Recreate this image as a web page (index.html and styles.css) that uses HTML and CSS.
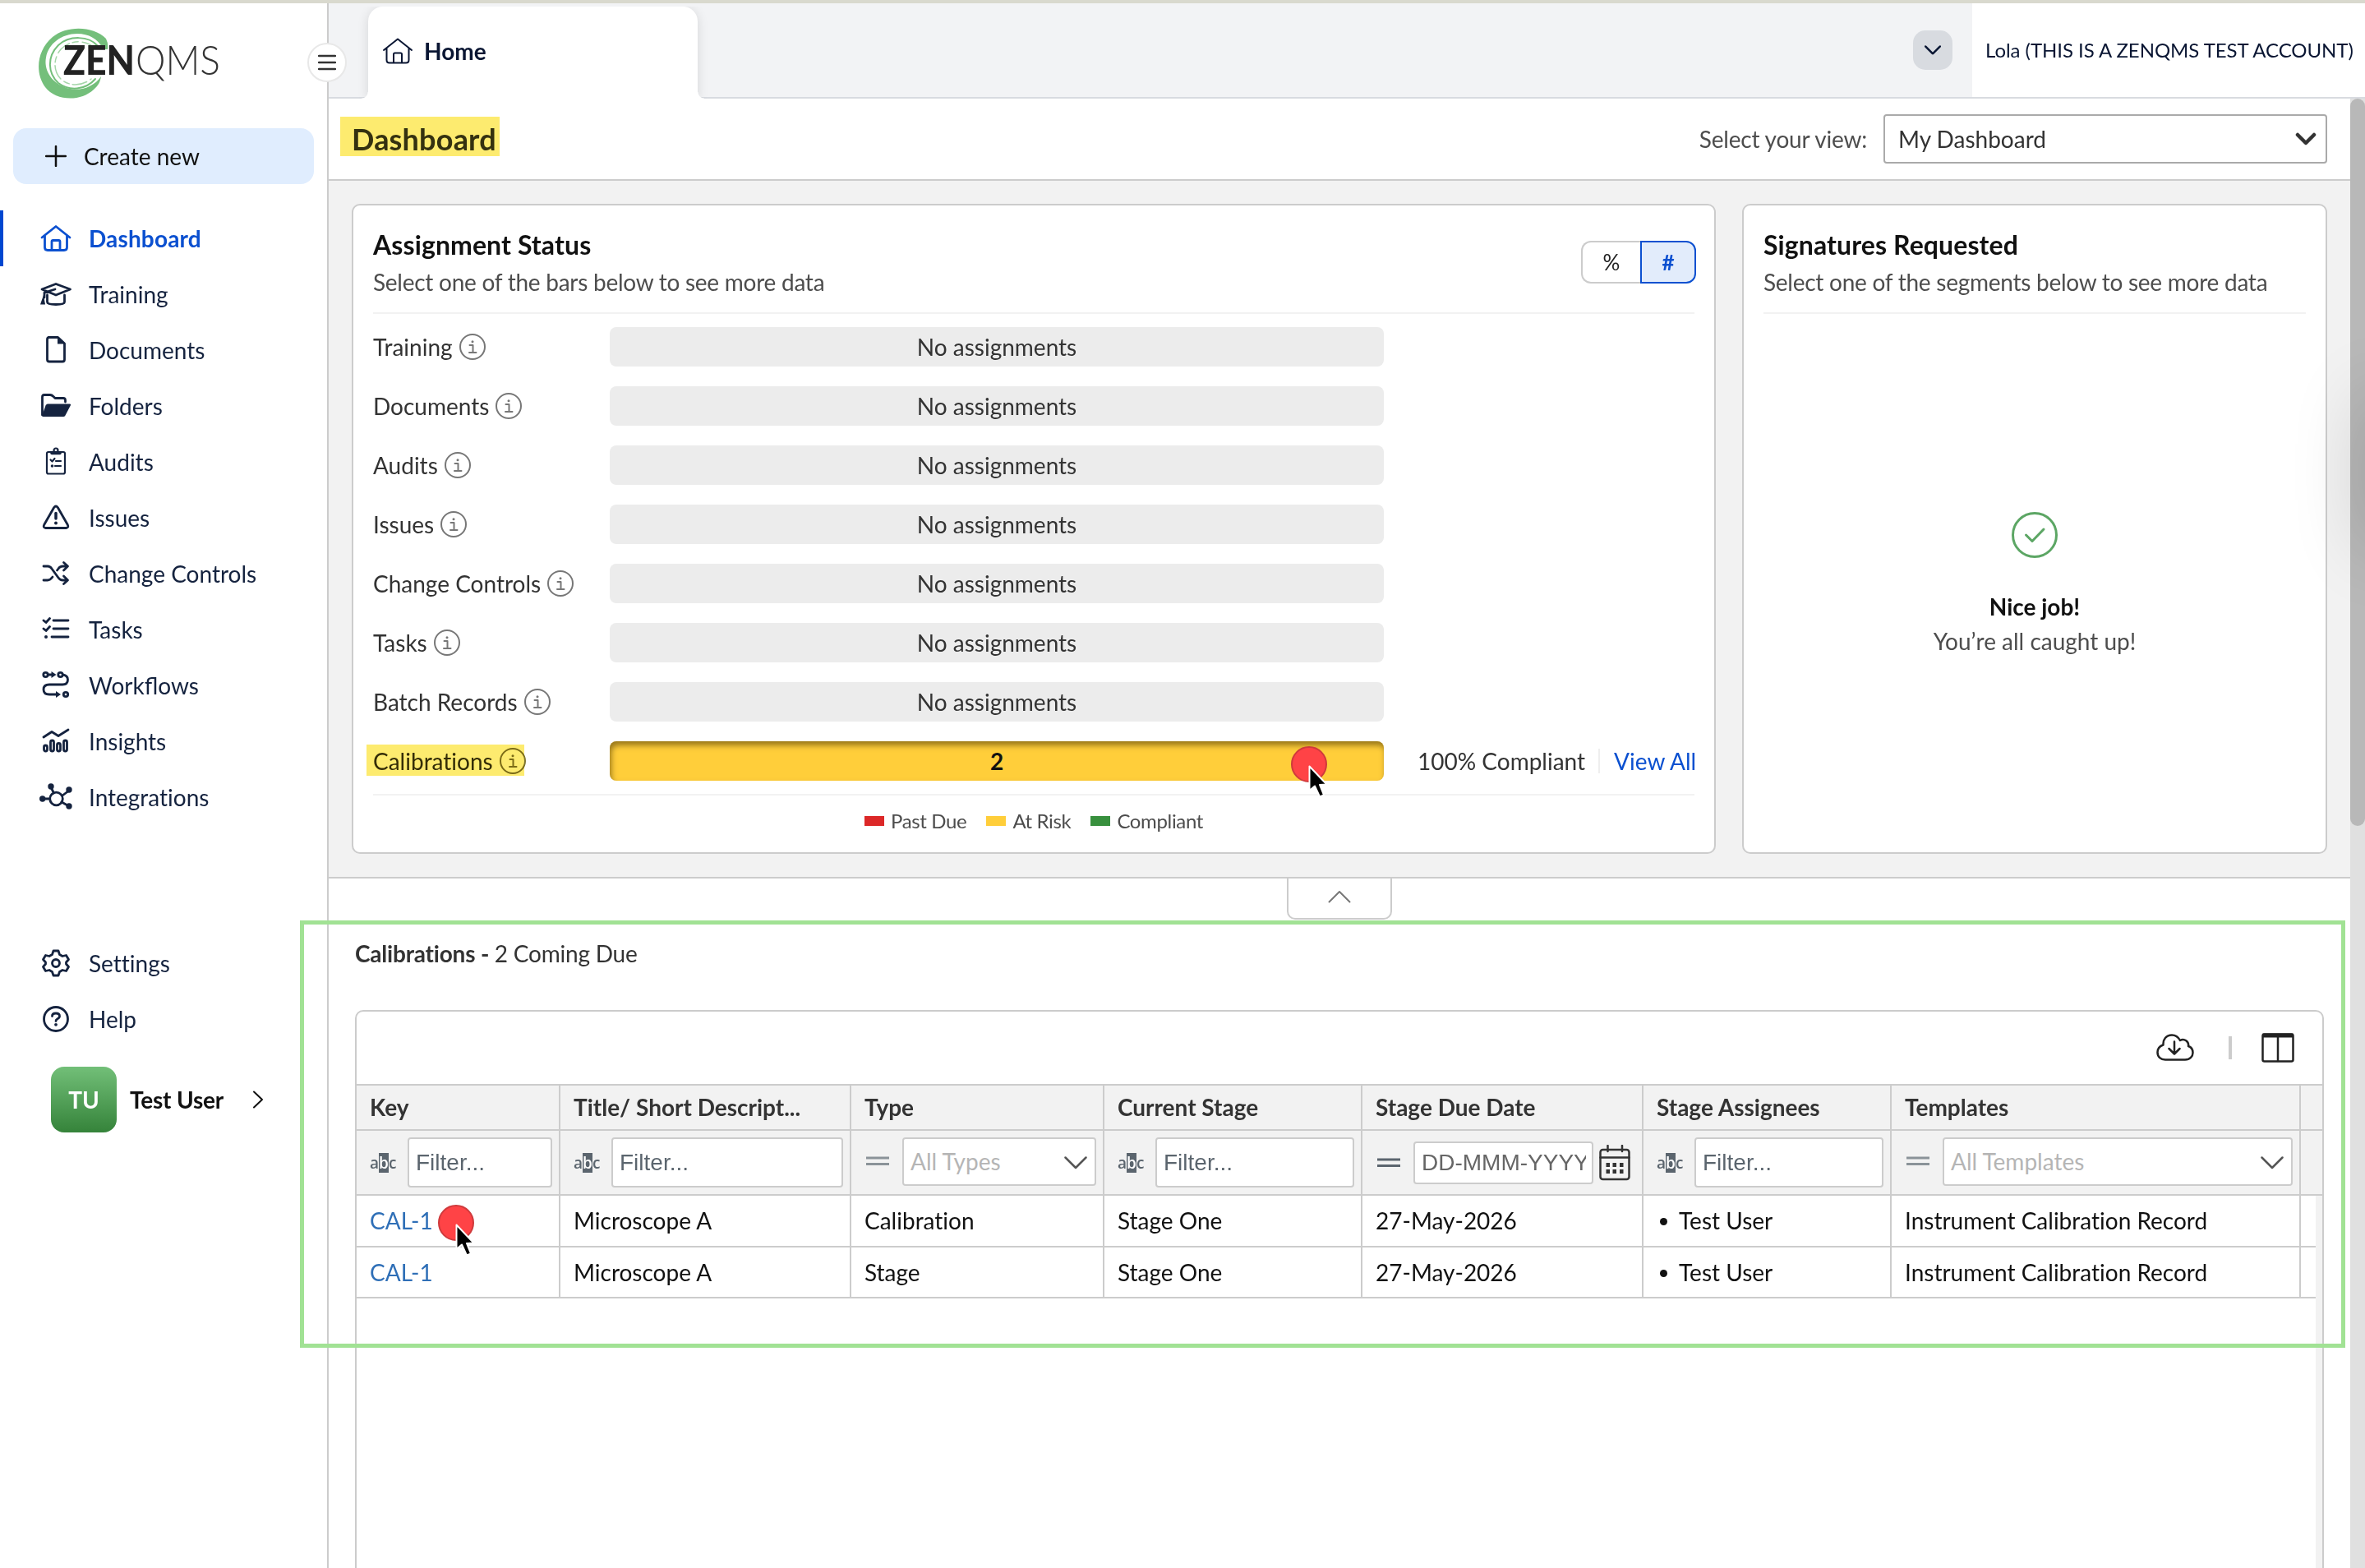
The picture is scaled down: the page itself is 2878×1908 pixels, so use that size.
FILE: index.html
```html
<!DOCTYPE html>
<html lang="en">
<head>
  <meta charset="UTF-8">
  <meta name="viewport" content="width=device-width, initial-scale=1.0">
  <title>ZenQMS - Dashboard</title>
  <link rel="stylesheet" href="styles.css">
</head>
<body>
  <svg class="defs" width="0" height="0">
    <symbol id="home" viewBox="0 0 40 40">
      <path d="M3 19 L20 5.5 L37 19 M6.5 17 V31 Q6.5 34.5 10 34.5 H30 Q33.5 34.5 33.5 31 V17 M15 34 V24 Q15 22.5 16.5 22.5 H23.5 Q25 22.5 25 24 V34"/>
    </symbol>
    <symbol id="info" viewBox="0 0 32 32">
      <circle cx="16" cy="16" r="15"/>
      <path d="M12.5 14 H16.5 V23 M12 23 H20.5"/>
      <circle cx="16" cy="9.8" r="1.5" class="solid"/>
    </symbol>
    <symbol id="cursor" viewBox="0 0 24 40">
      <path class="arrow" d="M1.5 1.5 V31 L8 25.500 L14 38.500 L19 36.500 L14 24 L22.500 23.500 Z"/>
    </symbol>
    <symbol id="equals" viewBox="0 0 28 12">
      <path d="M0 2 H28 M0 9.500 H28"/>
    </symbol>
    <symbol id="down" viewBox="0 0 28 16">
      <path d="M1.500 1.500 L14 14 L26.500 1.500"/>
    </symbol>
  </svg>

  <div class="app">
    <aside class="sidebar">
      <div class="logo">
        <svg width="240" height="90" viewBox="0 0 240 90">
          <path class="brush" d="M86 14 C70 -2 38 -2 21 12 C2 28 -1 55 12 73 C25 90 55 91 71 76 C77 71 79 66 80 60 C71 73 54 79 38 74 C20 68 10 53 13 37 C16 20 32 8 51 8 C65 8 76 14 83 27 H88 Q89 20 86 14 Z" transform="translate(-3 1)"/>
          <path class="brush-thin" d="M73 24 C62 11 38 11 25 23 C11 37 12 57 25 69 C38 79 58 78 70 64"/>
          <path class="brush-dash" d="M70 27 C58 15 38 17 28 28 C18 40 19 56 29 65 C40 74 55 72 65 64"/>
          <text x="31" y="59" class="logo-zen" textLength="87" lengthAdjust="spacingAndGlyphs">ZEN</text>
          <text x="119" y="59" class="logo-qms" textLength="103" lengthAdjust="spacingAndGlyphs">QMS</text>
        </svg>
      </div>
      <div class="create">
        <svg class="icon" width="26" height="26" viewBox="0 0 26 26"><path d="M13 1 V25 M1 13 H25"/></svg>
        Create new
      </div>
      <nav class="nav">
        <a class="nav-item active"><svg class="icon"><use href="#home"/></svg>Dashboard</a>
        <a class="nav-item">
          <svg class="icon" viewBox="0 0 40 40"><path d="M3 14 L20 7.500 L37.500 14 L20 21 Z M9.500 21 V29.500 Q9.500 32.500 20 32.500 Q30.500 32.500 30.500 29.500 V21 M19 14 L6 18 V24"/><path class="solid" d="M5 21 L7 32.500 H1 Z"/></svg>
          Training
        </a>
        <a class="nav-item">
          <svg class="icon" viewBox="0 0 40 40"><path d="M11 4.500 H22.500 L30.500 12 V31.500 Q30.500 34 28 34 H12 Q9.500 34 9.500 31.500 V7 Q9.500 4.500 12 4.500"/><path class="solid" d="M22 4 V12.500 H31.500 Z"/></svg>
          Documents
        </a>
        <a class="nav-item">
          <svg class="icon" viewBox="0 0 40 40"><path d="M3.500 31 V9 Q3.500 6.500 6 6.500 H13 Q15 6.500 17 8.500 L19 10.500 H29 Q31.500 10.500 31.500 13 V15"/><path class="solid" d="M10 17.500 H37 Q38.500 17.500 38 19 L31.500 31.500 Q30.500 33 29 33 H4.500 Q3 33 3.500 31 L7.500 19.500 Q8.500 17.500 10 17.500 Z"/></svg>
          Folders
        </a>
        <a class="nav-item">
          <svg class="icon thin" viewBox="0 0 40 40"><rect x="9" y="8" width="22" height="26.500" rx="2"/><circle cx="20" cy="6" r="2.500"/><path class="thick" d="M15 9.500 H25"/><path d="M13.500 17.500 L15.500 19.500 L18.500 16 M20 19 H26 M19 25 H26"/><circle class="solid" cx="15.500" cy="25" r="1.800"/></svg>
          Audits
        </a>
        <a class="nav-item">
          <svg class="icon" viewBox="0 0 40 40"><path d="M17.700 7.500 Q20 4.500 22.300 7.500 L34.300 28.500 Q36 32 32.500 32.500 H7.500 Q4 32 5.700 28.500 Z"/><path class="thick" d="M20 14.500 V21"/><circle class="solid" cx="20" cy="26.500" r="2"/></svg>
          Issues
        </a>
        <a class="nav-item">
          <svg class="icon" viewBox="0 0 40 40"><path d="M5 11 H10 Q13 11 15 14 L23 25 Q25 28 28.500 28 H34 M5 28 H10 Q13 28 16 24 M21.500 16 L23 14 Q25 11 28.500 11 H34 M29.500 6.500 L34.500 11 L29.500 16 M29.500 23 L34.500 28 L29.500 32.500"/></svg>
          Change Controls
        </a>
        <a class="nav-item">
          <svg class="icon" viewBox="0 0 40 40"><path d="M17 9 H35 M17 19 H35 M15 29 H35 M5 9 L8 11.500 L12.500 6.500 M5 19 L8 21.500 L12.500 16.500"/><circle class="solid" cx="8" cy="29" r="2"/></svg>
          Tasks
        </a>
        <a class="nav-item workflows">
          <svg class="icon" viewBox="0 0 40 40"><circle cx="7.500" cy="7" r="2.700"/><circle cx="25.500" cy="7" r="2.700"/><circle cx="32" cy="31" r="2.700"/><path d="M10.500 7 H16 M28.500 7 Q34.500 8 34.500 13 Q34.500 19 28 19 H12 Q5 19 5 25 Q5 31 12 31 H21"/><path class="solid" d="M14.500 3 L20.500 7 L14.500 11 Z M20 27 L26 31 L20 35 Z"/></svg>
          Workflows
        </a>
        <a class="nav-item">
          <svg class="icon" viewBox="0 0 40 40"><path d="M5 15 L15 8.500 L23 13.500 L35 6"/><rect x="5.500" y="25" width="4" height="7" rx="2"/><rect x="13.500" y="19" width="4" height="13" rx="2"/><rect x="21.500" y="22.500" width="4" height="9.500" rx="2"/><rect x="29.500" y="19" width="4" height="13" rx="2"/></svg>
          Insights
        </a>
        <a class="nav-item">
          <svg class="icon" viewBox="0 0 40 40"><circle cx="20.500" cy="22" r="7.800"/><path d="M4 22 H12 M14 8 L17.500 15 M28 18 L36 12 M27 26 L36 31"/><g class="solid"><circle cx="3.700" cy="22" r="3.700"/><circle cx="14" cy="7" r="3.700"/><circle cx="36" cy="11" r="3.700"/><circle cx="36" cy="31" r="3.700"/></g></svg>
          Integrations
        </a>
      </nav>
      <nav class="nav nav-bottom">
        <a class="nav-item">
          <svg class="icon" viewBox="0 0 40 40"><path d="M17 5 H23 L24.500 9.500 L28 11.500 L32.500 10.500 L35.500 15.500 L32.500 19 V21 L35.500 24.500 L32.500 29.500 L28 28.500 L24.500 30.500 L23 35 H17 L15.500 30.500 L12 28.500 L7.500 29.500 L4.500 24.500 L7.500 21 V19 L4.500 15.500 L7.500 10.500 L12 11.500 L15.500 9.500 Z"/><circle cx="20" cy="20" r="4.500"/></svg>
          Settings
        </a>
        <a class="nav-item">
          <svg class="icon" viewBox="0 0 40 40"><circle cx="20" cy="20" r="14.500"/><path d="M15.500 16.500 Q15.500 13 20 13 Q24.500 13 24.500 16.500 Q24.500 18.500 22 19.700 Q20 20.700 20 22.500"/><circle class="solid" cx="20" cy="26.800" r="1.900"/></svg>
          Help
        </a>
      </nav>
      <div class="user">
        <div class="avatar">TU</div>
        <span class="user-name">Test User</span>
        <svg class="icon" width="14" height="22" viewBox="0 0 14 22"><path d="M2 1.500 L12 11 L2 20.500"/></svg>
      </div>
      <button class="menu-toggle">
        <svg width="22" height="20" viewBox="0 0 22 20"><path d="M1 2 H21 M1 10 H21 M1 18 H21"/></svg>
      </button>
    </aside>

    <div class="main">
      <div class="tabbar">
        <div class="tab"><svg class="icon"><use href="#home"/></svg>Home</div>
        <div class="tab-more"><svg width="20" height="12" viewBox="0 0 28 16"><use href="#down"/></svg></div>
        <div class="account">Lola (THIS IS A ZENQMS TEST ACCOUNT)</div>
      </div>

      <div class="body">
        <div class="content">
          <header class="page-head">
            <h1><span>Dashboard</span></h1>
            <label>Select your view:</label>
            <div class="view-select">My Dashboard
              <svg width="26" height="16" viewBox="0 0 26 16"><path d="M3 3 L13 13 L23 3"/></svg>
            </div>
          </header>

          <section class="cards">
            <div class="card status-card">
              <div class="card-head">
                <div>
                  <h2>Assignment Status</h2>
                  <p>Select one of the bars below to see more data</p>
                </div>
                <div class="toggle"><span>%</span><span class="on">#</span></div>
              </div>
              <div class="bars">
                <div class="bar-row"><div class="bar-label">Training<svg class="info"><use href="#info"/></svg></div><div class="bar">No assignments</div></div>
                <div class="bar-row"><div class="bar-label">Documents<svg class="info"><use href="#info"/></svg></div><div class="bar">No assignments</div></div>
                <div class="bar-row"><div class="bar-label">Audits<svg class="info"><use href="#info"/></svg></div><div class="bar">No assignments</div></div>
                <div class="bar-row"><div class="bar-label">Issues<svg class="info"><use href="#info"/></svg></div><div class="bar">No assignments</div></div>
                <div class="bar-row"><div class="bar-label">Change Controls<svg class="info"><use href="#info"/></svg></div><div class="bar">No assignments</div></div>
                <div class="bar-row"><div class="bar-label">Tasks<svg class="info"><use href="#info"/></svg></div><div class="bar">No assignments</div></div>
                <div class="bar-row"><div class="bar-label">Batch Records<svg class="info"><use href="#info"/></svg></div><div class="bar">No assignments</div></div>
                <div class="bar-row">
                  <div class="bar-label marked">Calibrations<svg class="info"><use href="#info"/></svg></div>
                  <div class="bar at-risk">2
                    <div class="click click-bar"><svg><use href="#cursor"/></svg></div>
                  </div>
                  <div class="bar-meta"><span class="compliant">100% Compliant</span><a>View All</a></div>
                </div>
              </div>
              <div class="legend">
                <span><i class="red"></i>Past Due</span>
                <span><i class="yellow"></i>At Risk</span>
                <span><i class="green"></i>Compliant</span>
              </div>
            </div>

            <div class="card sign-card">
              <div class="card-head">
                <div>
                  <h2>Signatures Requested</h2>
                  <p>Select one of the segments below to see more data</p>
                </div>
              </div>
              <div class="empty">
                <svg width="56" height="56" viewBox="0 0 56 56"><circle cx="28" cy="28" r="26.500"/><path d="M17.500 28 L25 35.500 L39 21"/></svg>
                <strong>Nice job!</strong>
                <span>You’re all caught up!</span>
              </div>
            </div>
          </section>

          <section class="details">
            <div class="collapse"><svg width="28" height="16" viewBox="0 0 28 16"><path d="M1.500 14.500 L14 2 L26.500 14.500"/></svg></div>
            <h3>Calibrations - <span>2 Coming Due</span></h3>
            <div class="grid">
              <div class="grid-tools">
                <svg width="46" height="34" viewBox="0 0 46 34"><path d="M11 31.500 H35 C41 31.500 44.500 27.500 44.500 23 C44.500 19 42 16 39 15 C40 9.500 34 5 29 8 C26.500 3.500 23 1.500 19 1.500 C12 1.500 8 7 8.500 13.500 C4 15 1.500 18.500 1.500 22.500 C1.500 28 5.500 31.500 11 31.500 Z M22 9.500 V24 M15.500 18 L22 24.500 L28.500 18"/></svg>
                <i class="tool-sep"></i>
                <svg width="40" height="36" viewBox="0 0 40 36"><rect x="1.500" y="1.500" width="37" height="33" rx="2"/><path d="M20 4 V34"/><path class="top" d="M1.500 3 H38.500"/></svg>
              </div>
              <div class="grid-row grid-head">
                <div>Key</div><div>Title/ Short Descript...</div><div>Type</div><div>Current Stage</div><div>Stage Due Date</div><div>Stage Assignees</div><div>Templates</div><div></div>
              </div>
              <div class="grid-row grid-filter">
                <div><span class="abc">a<b>b</b>c</span><span class="input">Filter...</span></div>
                <div><span class="abc">a<b>b</b>c</span><span class="input">Filter...</span></div>
                <div><svg class="eq light"><use href="#equals"/></svg><span class="input select">All Types<svg class="caret"><use href="#down"/></svg></span></div>
                <div><span class="abc">a<b>b</b>c</span><span class="input">Filter...</span></div>
                <div>
                  <svg class="eq"><use href="#equals"/></svg><span class="input date"><span>DD-MMM-YYYY</span></span>
                  <svg class="calendar" width="38" height="44" viewBox="0 0 38 44"><rect x="1.500" y="6" width="35" height="36" rx="3"/><path d="M1.500 15.500 H36.500 M10.500 1 V8 M28 1 V8"/><path class="dots" d="M8.500 24.500 H13 M16.500 24.500 H21 M25 24.500 H29.500 M8.500 32.500 H13 M16.500 32.500 H21 M25 32.500 H29.500"/></svg>
                </div>
                <div><span class="abc">a<b>b</b>c</span><span class="input">Filter...</span></div>
                <div><svg class="eq light"><use href="#equals"/></svg><span class="input select">All Templates<svg class="caret"><use href="#down"/></svg></span></div>
                <div></div>
              </div>
              <div class="grid-body">
                <div class="grid-row">
                  <div><a>CAL-1</a><div class="click click-key"><svg><use href="#cursor"/></svg></div></div>
                  <div>Microscope A</div><div>Calibration</div><div>Stage One</div><div>27-May-2026</div><div class="assignee">Test User</div><div>Instrument Calibration Record</div><div></div>
                </div>
                <div class="grid-row">
                  <div><a>CAL-1</a></div>
                  <div>Microscope A</div><div>Stage</div><div>Stage One</div><div>27-May-2026</div><div class="assignee">Test User</div><div>Instrument Calibration Record</div><div></div>
                </div>
              </div>
            </div>
          </section>
        </div>
        <div class="scrollbar"><div class="thumb"></div></div>
      </div>
    </div>
  </div>

  <div class="callout"></div>
  <div class="edge-shadow"></div>
</body>
</html>
```
FILE: styles.css
```css
* {
  box-sizing: border-box;
}
body {
  margin: 0;
  width: 2878px;
  height: 1908px;
  overflow: hidden;
  position: relative;
  background: #fff;
  border-top: 4px solid #d9d9ce;
  font-family: Lato, "Liberation Sans", sans-serif;
  font-size: 28px;
  font-variant-ligatures: no-common-ligatures;
  color: #333;
}
body::before {
  content: "";
  position: absolute;
  top: -4px;
  left: 0;
  right: 0;
  height: 2px;
  background: #f6f6e4;
}
h1, h2, h3, p {
  margin: 0;
}
svg {
  fill: none;
  stroke: currentColor;
  stroke-width: 2.5;
  stroke-linecap: round;
  stroke-linejoin: round;
  flex-shrink: 0;
}
.solid {
  fill: currentColor;
  stroke: none;
}
.defs {
  position: absolute;
}
.app {
  display: flex;
  height: 1904px;
  overflow: hidden;
}

/* sidebar */
.sidebar {
  position: relative;
  z-index: 2;
  width: 400px;
  flex-shrink: 0;
  border-right: 2px solid #ccc;
  color: #15233f;
}
.logo {
  height: 152px;
  padding: 28px 0 0 46px;
}
.logo svg {
  stroke: none;
}
.brush {
  fill: #74bf7b;
}
.logo .brush-thin {
  stroke: #74bf7b;
  stroke-width: 2;
}
.logo .brush-dash {
  stroke: #a5d6a9;
  stroke-width: 1.5;
  stroke-dasharray: 18 5 7 4;
}
.logo-zen, .logo-qms {
  font-size: 50px;
  font-weight: 900;
  fill: #222;
}
.logo-qms {
  font-weight: 300;
  fill: #333;
}
.create {
  display: flex;
  align-items: center;
  gap: 21px;
  width: 366px;
  height: 68px;
  margin-left: 16px;
  padding-left: 39px;
  border-radius: 16px;
  background: #e0edfe;
  color: #111;
}
.nav {
  margin-top: 32px;
}
.nav-bottom {
  margin-top: 134px;
}
.nav-item {
  display: flex;
  align-items: center;
  gap: 20px;
  height: 68px;
  padding-left: 48px;
}
.nav-item .icon {
  width: 40px;
  height: 40px;
  stroke-width: 2.8;
}
.nav-item .thin {
  stroke-width: 2.2;
}
.workflows {
  font-variant-ligatures: normal;
}
.thick {
  stroke-width: 3.5;
}
.nav-item.active {
  color: #0b50d0;
  font-weight: 700;
  letter-spacing: 0.15px;
  background: linear-gradient(#0047d0, #0047d0) no-repeat 0 0 / 4px 68px;
}
.user {
  display: flex;
  align-items: center;
  padding: 24px 0 0 62px;
  color: #111;
}
.user .icon {
  stroke-width: 2;
}
.avatar {
  width: 80px;
  height: 80px;
  margin-right: 16px;
  border-radius: 16px;
  background: linear-gradient(#72bf78, #35833a);
  color: #fff;
  font-weight: 700;
  line-height: 80px;
  text-align: center;
}
.user-name {
  width: 149px;
  font-weight: 700;
  letter-spacing: -0.2px;
}
.menu-toggle {
  position: absolute;
  top: 48px;
  left: 374px;
  z-index: 3;
  display: flex;
  align-items: center;
  justify-content: center;
  width: 48px;
  height: 48px;
  padding: 0;
  border: 2px solid #e8e8e8;
  border-radius: 50%;
  background: #fff;
  color: #333;
}

/* top tabs */
.main {
  flex: 1;
  min-width: 0;
}
.tabbar {
  display: flex;
  align-items: center;
  height: 116px;
  border-bottom: 2px solid #d8dbe0;
  background: #f2f3f5;
  color: #0a1633;
}
.tab {
  position: relative;
  display: flex;
  align-items: center;
  gap: 12px;
  width: 401px;
  height: 112px;
  margin: 6px auto 0 48px;
  padding: 0 0 4px 16px;
  border-radius: 18px 18px 0 0;
  background: #fff;
  box-shadow: 0 2px 14px rgba(0, 0, 0, 0.12);
  clip-path: inset(0 -14px 0 -14px);
  font-weight: 700;
}
.tab::before, .tab::after {
  content: "";
  position: absolute;
  bottom: 0;
  left: -8px;
  width: 8px;
  height: 8px;
  background: radial-gradient(circle at 0 0, transparent 7px, #fff 8px);
}
.tab::after {
  left: auto;
  right: -8px;
  background: radial-gradient(circle at 100% 0, transparent 7px, #fff 8px);
}
.tab .icon {
  width: 40px;
  height: 40px;
  stroke-width: 2;
}
.tab-more {
  display: flex;
  align-items: center;
  justify-content: center;
  width: 48px;
  height: 48px;
  margin: 0 24px 0 0;
  border-radius: 15px;
  background: #d8dbe0;
}
.tab-more svg {
  stroke-width: 3.5;
}
.account {
  width: 478px;
  height: 114px;
  padding-left: 16px;
  background: #fff;
  font-size: 24px;
  letter-spacing: -0.05px;
  line-height: 114px;
  white-space: nowrap;
}
.body {
  display: flex;
  height: 1788px;
  overflow: hidden;
}
.content {
  width: 2460px;
}
.scrollbar {
  width: 18px;
  background: #e0e0e0;
}
.thumb {
  height: 885px;
  border-radius: 9px;
  background: #b8b8b8;
}

/* page header */
.page-head {
  display: flex;
  align-items: center;
  height: 100px;
  padding: 0 28px 0 14px;
  border-bottom: 2px solid #ccc;
  color: #4d4d4d;
}
.page-head label {
  letter-spacing: -0.2px;
}
.page-head h1 {
  height: 48px;
  margin: -6px auto 0 0;
  padding: 0 4px 0 14px;
  background: #fdeb6f;
  color: #343110;
  font-size: 36px;
  letter-spacing: 0.2px;
  line-height: 55px;
}
.view-select {
  display: flex;
  align-items: center;
  justify-content: space-between;
  width: 540px;
  height: 60px;
  margin-left: 20px;
  padding: 0 11px 0 16px;
  border: 2px solid #aaa;
  border-radius: 4px;
  color: #333;
}
.view-select svg {
  stroke-width: 4.5;
}

/* dashboard cards */
.cards {
  display: flex;
  gap: 32px;
  height: 849px;
  padding: 28px;
  border-bottom: 2px solid #ccc;
  background: #f2f2f2;
}
.card {
  padding: 29px 24px 0;
  border: 2px solid #ccc;
  border-radius: 10px;
  background: #fff;
}
.status-card {
  width: 1660px;
}
.sign-card {
  width: 712px;
}
.card-head {
  display: flex;
  justify-content: space-between;
  height: 103px;
  border-bottom: 2px solid #f2f2f2;
}
.card-head h2 {
  color: #111;
  font-size: 32px;
  letter-spacing: 0.1px;
  line-height: 38px;
}
.card-head p {
  margin-top: 8px;
  color: #4d4d4d;
  letter-spacing: -0.26px;
  line-height: 36px;
}
.toggle {
  display: flex;
  height: 52px;
  margin: 14px -2px 0 0;
  line-height: 49px;
  text-align: center;
  color: #222;
  font-size: 26px;
}
.toggle span {
  width: 72px;
  border: 2px solid #ccc;
  border-right: 0;
  border-radius: 12px 0 0 12px;
}
.toggle .on {
  width: 68px;
  border: 2px solid #0b50d0;
  border-radius: 0 12px 12px 0;
  background: #e2ecfb;
  color: #0b50d0;
  font-weight: 700;
}
.bars {
  display: flex;
  flex-direction: column;
  gap: 24px;
  height: 586px;
  padding-top: 16px;
  border-bottom: 2px solid #f2f2f2;
}
.bar-row {
  display: flex;
  align-items: center;
  height: 48px;
}
.bar-label {
  display: flex;
  align-items: center;
  gap: 8px;
  width: 288px;
  flex-shrink: 0;
}
.info {
  width: 32px;
  height: 32px;
  color: #777;
  stroke-width: 2;
}
.marked {
  position: relative;
  color: #34310f;
}
.marked .info {
  color: #7c7432;
}
.marked::before {
  content: "";
  position: absolute;
  z-index: 0;
  top: -3px;
  left: -8px;
  width: 192px;
  height: 38px;
  background: #fdeb6f;
  mix-blend-mode: multiply;
}
.bar {
  width: 942px;
  height: 48px;
  flex-shrink: 0;
  border-radius: 8px;
  background: #ececec;
  line-height: 49px;
  text-align: center;
}
.at-risk {
  position: relative;
  background: #ffce3a;
  box-shadow: inset 2px 5px 7px rgba(70, 50, 0, 0.55);
  color: #111;
  font-weight: 700;
}
.bar-meta {
  display: flex;
  margin-left: 41px;
  white-space: nowrap;
}
.compliant {
  padding-right: 16px;
  border-right: 2px solid #eee;
  line-height: 30px;
}
.bar-meta a {
  margin-left: 17px;
  color: #0b50d0;
  line-height: 30px;
}
.legend {
  display: flex;
  justify-content: center;
  gap: 24px;
  padding-top: 16px;
  color: #4d4d4d;
  font-size: 24px;
  letter-spacing: -0.35px;
}
.legend span {
  display: flex;
  align-items: center;
  gap: 8px;
}
.legend i {
  width: 24px;
  height: 12px;
}
.red {
  background: #dc2828;
}
.yellow {
  background: #ffce3a;
}
.green {
  background: #38903e;
}
.empty {
  display: flex;
  flex-direction: column;
  align-items: center;
  padding-top: 241px;
  color: #4d4d4d;
}
.empty svg {
  margin-bottom: 42px;
  color: #5ca664;
  stroke-width: 3;
}
.empty strong {
  margin-bottom: 8px;
  color: #111;
}

/* records grid */
.details {
  position: relative;
  padding: 73px 32px 0;
}
.collapse {
  position: absolute;
  top: 0;
  left: 1166px;
  width: 128px;
  height: 50px;
  border: 2px solid #ccc;
  border-top: 0;
  border-radius: 0 0 10px 10px;
  text-align: center;
  line-height: 38px;
  color: #777;
}
.collapse svg {
  stroke-width: 2;
}
.details h3 {
  font-size: 28px;
  letter-spacing: -0.2px;
  line-height: 36px;
}
.details h3 span {
  font-weight: 400;
}
.grid {
  height: 700px;
  margin-top: 51px;
  border: 2px solid #ccc;
  border-radius: 10px 10px 0 0;
}
.grid-tools {
  display: flex;
  align-items: center;
  justify-content: flex-end;
  height: 90px;
  padding-right: 34px;
  border-bottom: 2px solid #ccc;
  color: #222;
}
.tool-sep {
  width: 4px;
  height: 28px;
  margin: 0 36px 0 42px;
  background: #ccc;
}
.grid-tools .top {
  stroke-width: 5;
  stroke-linecap: butt;
}
.grid-row {
  display: grid;
  grid-template-columns: 248px 354px 308px 314px 342px 302px 498px 1fr;
  height: 63px;
  border-bottom: 2px solid #ccc;
  color: #111;
}
.grid-row + .grid-row {
  height: 62px;
}
.grid-row > div {
  position: relative;
  display: flex;
  align-items: center;
  min-width: 0;
  padding: 0 0 1px 16px;
  border-right: 2px solid #ccc;
}
.grid-row > div:last-child {
  border-right: 0;
}
.grid-row a {
  color: #2f6fb7;
}
.grid-body {
  height: 600px;
  border-right: 8px solid #f2f2f2;
}
.grid-row.grid-head {
  height: 55px;
  background: #f2f2f2;
  color: #333;
  font-weight: 700;
}
.grid-row.grid-filter {
  height: 79px;
  background: #f2f2f2;
}
.grid-filter > div {
  padding-right: 8px;
  padding-bottom: 0;
}
.abc {
  width: 46px;
  color: #5b656e;
  font-family: "Open Sans", sans-serif;
  font-size: 19px;
  font-weight: 600;
  line-height: 24px;
}
.abc b {
  display: inline-block;
  width: 12px;
  background: #5b656e;
  color: #fff;
  text-align: center;
  font-weight: 600;
}
.input {
  display: flex;
  align-items: center;
  justify-content: space-between;
  flex: 1;
  height: 61px;
  padding-left: 8px;
  border: 2px solid #ccc;
  border-radius: 4px;
  background: #fff;
  color: #5b656e;
  font-family: "Liberation Sans", sans-serif;
}
.input.select {
  height: 59px;
  margin-top: -2px;
  padding: 0 9px 2px 8px;
  color: #b5b5b5;
  font-family: Lato, sans-serif;
}
.eq {
  width: 28px;
  height: 12px;
  margin: 0 16px 0 2px;
  color: #5b656e;
  stroke-width: 3;
  stroke-linecap: butt;
}
.eq.light {
  margin-top: -3px;
  color: #8b9399;
}
.caret {
  width: 28px;
  height: 16px;
  margin-top: 4px;
  color: #555;
}
.input.date {
  flex: none;
  width: 219px;
  height: 52px;
  padding-right: 7px;
  color: #666;
}
.date span {
  overflow: hidden;
  white-space: nowrap;
}
.calendar {
  margin: 0 0 0 7px;
  color: #333;
}
.calendar .dots {
  stroke-width: 5;
  stroke-linecap: butt;
}
.assignee::before {
  content: "";
  width: 9px;
  height: 9px;
  margin: 3px 14px 0 4px;
  border-radius: 50%;
  background: #111;
}

/* click markers */
.click {
  position: absolute;
  z-index: 4;
  width: 44px;
  height: 44px;
  border: 2px solid #cf3a3c;
  border-radius: 50%;
  background: #ff4346;
}
.click svg {
  position: absolute;
  top: 21px;
  left: 19px;
  width: 24px;
  height: 40px;
}
.arrow {
  fill: #000;
  stroke: #fff;
  stroke-width: 2;
}
.click-bar {
  left: 829px;
  top: 6px;
}
.click-key {
  left: 99px;
  top: 11px;
}
.callout {
  position: absolute;
  z-index: 5;
  top: 1116px;
  left: 365px;
  width: 2489px;
  height: 520px;
  border: 5px solid #a1e294;
}
.edge-shadow {
  position: absolute;
  z-index: 6;
  top: 490px;
  left: 2890px;
  width: 40px;
  height: 160px;
  box-shadow: 0 0 90px 10px rgba(0, 0, 0, 0.18);
}
```
